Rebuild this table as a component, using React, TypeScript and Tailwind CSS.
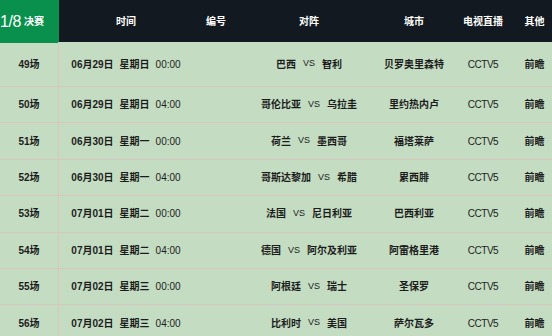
const matches = [
  { no: '49场', date: '06月29日', week: '星期日', time: '00:00', home: '巴西', away: '智利', city: '贝罗奥里森特' },
  { no: '50场', date: '06月29日', week: '星期日', time: '04:00', home: '哥伦比亚', away: '乌拉圭', city: '里约热内卢' },
  { no: '51场', date: '06月30日', week: '星期一', time: '00:00', home: '荷兰', away: '墨西哥', city: '福塔莱萨' },
  { no: '52场', date: '06月30日', week: '星期一', time: '04:00', home: '哥斯达黎加', away: '希腊', city: '累西腓' },
  { no: '53场', date: '07月01日', week: '星期二', time: '00:00', home: '法国', away: '尼日利亚', city: '巴西利亚' },
  { no: '54场', date: '07月01日', week: '星期二', time: '04:00', home: '德国', away: '阿尔及利亚', city: '阿雷格里港' },
  { no: '55场', date: '07月02日', week: '星期三', time: '00:00', home: '阿根廷', away: '瑞士', city: '圣保罗' },
  { no: '56场', date: '07月02日', week: '星期三', time: '04:00', home: '比利时', away: '美国', city: '萨尔瓦多' },
];

const font = { fontFamily: '"Liberation Sans", "Noto Sans CJK SC", sans-serif' };

export default function App() {
  return (
    <div className="w-[552px] h-[336px] overflow-hidden bg-[#c4dcc2] text-[#1c1c1c] text-[10px] font-semibold" style={font}>
      {/* header */}
      <div className="flex h-[42px] bg-[#131920] text-white">
        <div className="w-[59px] h-[43px] bg-[#08904c] flex items-center overflow-hidden">
          <span className="text-[16px] font-normal tracking-tight">1/8</span>
          <span className="ml-[3px] text-[10px]">决赛</span>
        </div>
        <div className="w-[134px] flex items-center justify-center">时间</div>
        <div className="w-[46px] flex items-center justify-center">编号</div>
        <div className="w-[140px] flex items-center justify-center">对阵</div>
        <div className="w-[70px] flex items-center justify-center">城市</div>
        <div className="w-[68px] flex items-center justify-center">电视直播</div>
        <div className="w-[35px] flex items-center justify-center">其他</div>
      </div>

      {matches.map((m, i) => (
        <div
          key={m.no}
          className={`flex border-b border-[#d9c6bf] ${i === 0 ? 'h-[45px]' : 'h-[36.4px]'}`}
        >
          <div className="w-[59px] flex items-center justify-center border-r border-[#d9c6bf]">{m.no}</div>
          <div className="w-[134px] flex items-center justify-center gap-[6px]">
            <span>{m.date}</span>
            <span>{m.week}</span>
            <span className="font-normal">{m.time}</span>
          </div>
          <div className="w-[46px]" />
          <div className="w-[140px] flex items-center justify-center gap-[7px]">
            <span>{m.home}</span>
            <span className="text-[9px] font-normal">VS</span>
            <span>{m.away}</span>
          </div>
          <div className="w-[70px] flex items-center justify-center">{m.city}</div>
          <div className="w-[68px] flex items-center justify-center font-normal tracking-tighter">CCTV5</div>
          <div className="w-[35px] flex items-center justify-center">前瞻</div>
        </div>
      ))}
    </div>
  );
}
